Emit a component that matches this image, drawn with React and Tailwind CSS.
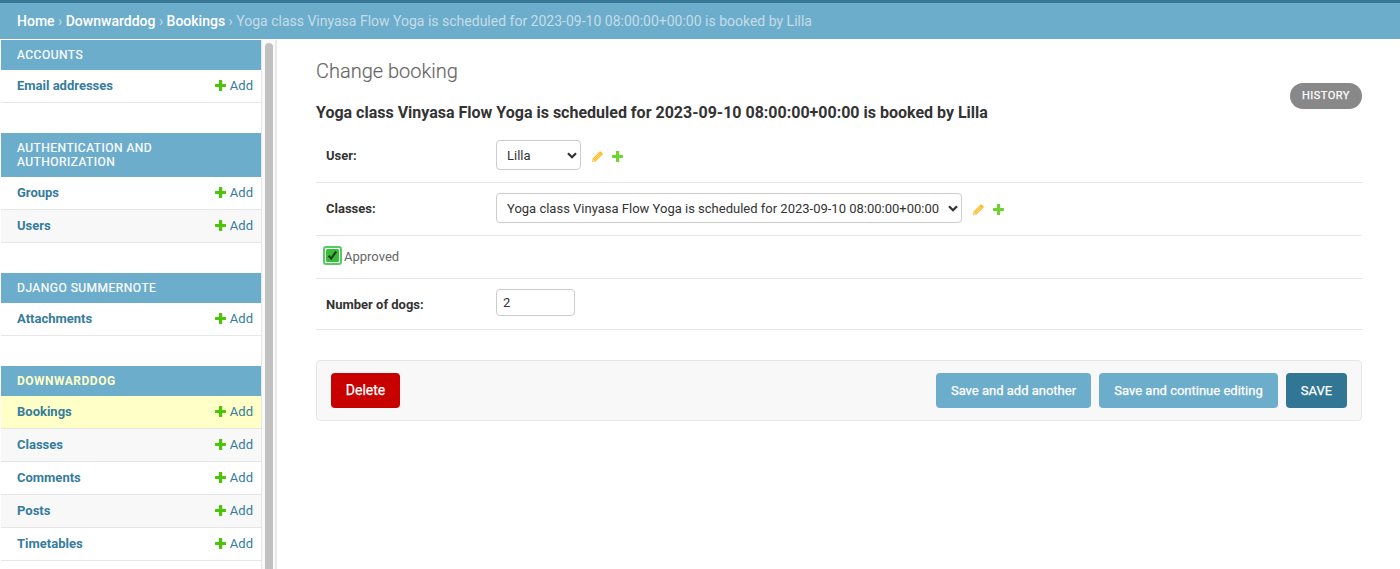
const Plus = ({ className = "text-[#4bc508]" }) => (
  <svg className={"shrink-0 " + className} width="13" height="13" viewBox="0 0 13 13" fill="currentColor">
    <path d="M5 1.4q0-.4.4-.4h2.4q.4 0 .4.4V5h3.4q.4 0 .4.4v2.2q0 .4-.4.4H8.2v3.600q0 .4-.4.4H5.400q-.4 0-.4-.4V8H1.400q-.4 0-.4-.4V5.400q0-.4.4-.4H5z" />
  </svg>
);

const Pencil = () => (
  <svg className="shrink-0 text-[#fbc02d]" width="13" height="13" viewBox="0 0 13 13" fill="currentColor">
    <path d="M1 12l.6-3.500L8.400 1.700q.8-.8 1.600 0l1.400 1.400q.8.8 0 1.600L4.500 11.400z" />
    <path d="M3.200 8.800l5.200-5.200M4.300 9.900l5.200-5.200" fill="none" stroke="#fff" strokeOpacity=".5" strokeWidth=".7" />
    <path d="M1.900 9.300l1.800 1.800-1.500.3-.6-.6z" fill="#fff" fillOpacity=".6" />
  </svg>
);

const Chevron = () => (
  <svg className="shrink-0" width="10" height="7" viewBox="0 0 10 7" fill="none" stroke="#333" strokeWidth="2.3">
    <path d="M1 1.200l4 4 4-4" />
  </svg>
);

const groups = [
  { title: ["ACCOUNTS"], items: ["Email addresses"] },
  { title: ["AUTHENTICATION AND", "AUTHORIZATION"], items: ["Groups", "Users"] },
  { title: ["DJANGO SUMMERNOTE"], items: ["Attachments"] },
  { title: ["DOWNWARDDOG"], items: ["Bookings", "Classes", "Comments", "Posts", "Timetables"], current: true },
];

function Group({ group }) {
  return (
    <section className="mb-[30px]">
      <h2 className={"bg-[#6dadcc] px-4 py-2 text-[12px] leading-[14px] tracking-[0.5px] " + (group.current ? "font-bold text-[#ffffc8]" : "text-white [-webkit-text-stroke:0.2px_white]")}>
        {group.title.map((t) => <div key={t}>{t}</div>)}
      </h2>
      {group.items.map((item, i) => (
        <div
          key={item}
          className={"flex h-[33px] items-center justify-between border-b border-[#e6e6e6] pr-2 pl-4 text-[13px] text-[#357c9d] " +
            (item === "Bookings" ? "bg-[#ffffc8]" : i % 2 ? "bg-[#f8f8f8]" : "bg-white")}
        >
          <span className="font-bold">{item}</span>
          <span className="flex items-center gap-[3px]"><Plus className="mb-px text-[#4bc508]" />Add</span>
        </div>
      ))}
    </section>
  );
}

function SelectRow({ label, value, width }) {
  return (
    <div className="flex h-[53px] border-b border-[#e6e6e6] pt-[10px] pl-[10px]">
      <div className="w-[170px] leading-[31px] font-bold">{label}</div>
      <div className={"flex h-[30px] items-center justify-between rounded border border-[#ccc] pr-[3px] pl-[10px] leading-[30px] " + width}>
        <span className="pt-px">{value}</span>
        <Chevron />
      </div>
      <div className="flex h-[33px] items-center gap-[7px] pl-[10px]">
        <Pencil />
        <Plus className="text-[#70d22e]" />
      </div>
    </div>
  );
}

export default function App() {
  return (
    <div className="flex h-[569px] w-[1400px] flex-col overflow-hidden bg-white font-['Roboto',sans-serif] text-[13px] text-[#333]">
      <header className="h-[40px] shrink-0 border-t-[3px] border-b border-t-[#357794] border-b-white bg-[#6dadcc] pl-[17px] text-[14px] leading-[36px] text-[#c4dce8]">
        <span className="font-medium text-white">Home</span> › <span className="font-medium text-white">Downwarddog</span> › <span className="font-medium text-white">Bookings</span> › Yoga class Vinyasa Flow Yoga is scheduled for 2023-09-10 08:00:00+00:00 is booked by Lilla
      </header>
      <div className="flex min-h-0 flex-1">
        <nav className="w-[262px] shrink-0 overflow-hidden border-r border-[#e6e6e6] pl-px">
          {groups.map((g) => <Group key={g.title[0]} group={g} />)}
        </nav>
        <div className="w-[15px] shrink-0 border-r-2 border-[#e8e8e8] bg-[#fafafa] pt-[3px] pl-[3px]">
          <div className="h-[560px] w-2 rounded-t-full bg-[#c1c1c1]" />
        </div>
        <main className="flex-1 pt-5 pr-[38px] pl-[39px]">
          <h1 className="text-[20px] leading-[22px] font-light text-[#666] [-webkit-text-stroke:0.15px_#666]">Change booking</h1>
          <div className="flex justify-between">
            <h2 className="pt-[21px] text-[16px] leading-[20px] font-bold">Yoga class Vinyasa Flow Yoga is scheduled for 2023-09-10 08:00:00+00:00 is booked by Lilla</h2>
            <div className="mt-px h-[26px] w-[72px] rounded-full bg-[#888] text-center text-[11px] leading-[25px] tracking-[0.5px] text-white [-webkit-text-stroke:0.25px_white]">HISTORY</div>
          </div>
          <div className="mt-[7px]">
            <SelectRow label="User:" value="Lilla" width="w-[85px]" />
            <SelectRow label="Classes:" value="Yoga class Vinyasa Flow Yoga is scheduled for 2023-09-10 08:00:00+00:00" width="w-[466px]" />
          </div>
          <div className="flex h-[43px] border-b border-[#e6e6e6] pt-[10px] pl-[7px]">
            <svg width="19" height="19" viewBox="0 0 19 19">
              <rect x="1" y="1" width="17" height="17" rx="2" fill="#fff" stroke="#55cb62" strokeWidth="2" />
              <rect x="3" y="3" width="13" height="13" rx="1.5" fill="#35bf35" />
              <path d="M5.500 9.700l2.700 2.800 5-7" fill="none" stroke="#303b30" strokeWidth="2.200" />
            </svg>
            <span className="pl-[2px] leading-[21px] text-[#666]">Approved</span>
          </div>
          <div className="flex h-[51px] border-b border-[#e6e6e6] pt-[10px] pl-[10px]">
            <div className="w-[170px] leading-[31px] font-bold">Number of dogs:</div>
            <div className="h-[27px] w-[79px] rounded border border-[#ccc] pl-[6px] leading-[25px]">2</div>
          </div>
          <div className="mt-[30px] flex h-[61px] items-start gap-2 rounded border border-[#e6e6e6] bg-[#f8f8f8] px-[14px] pt-3 text-[13px] leading-[35px] text-white [-webkit-text-stroke:0.25px_white]">
            <div className="mr-auto w-[69px] rounded bg-[#c80000] text-center text-[14px]">Delete</div>
            <div className="w-[155px] rounded bg-[#6dadcc] text-center">Save and add another</div>
            <div className="w-[179px] rounded bg-[#6dadcc] text-center">Save and continue editing</div>
            <div className="w-[61px] rounded bg-[#317693] text-center">SAVE</div>
          </div>
        </main>
      </div>
    </div>
  );
}
